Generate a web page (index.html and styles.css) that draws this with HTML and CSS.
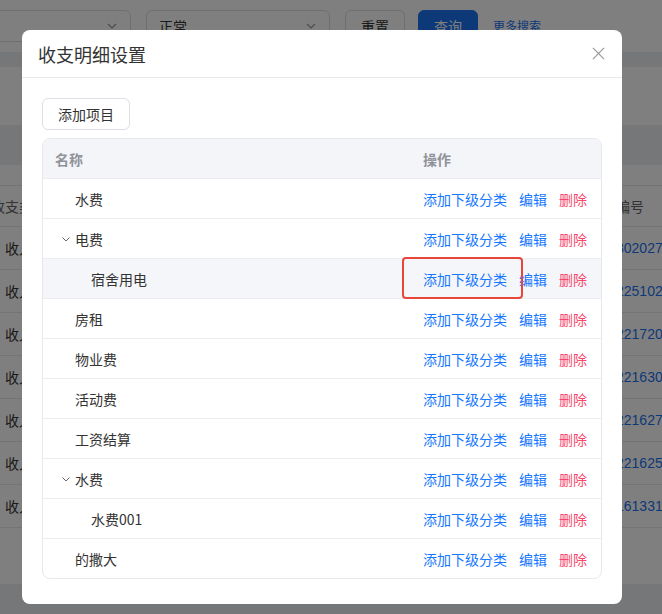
FILE: index.html
```html
<html>
<head>
<meta charset="utf-8">
<title>收支明细</title>
<link rel="stylesheet" href="styles.css">
</head>
<body>

<div class="page">
  <div class="search">
    <div class="select selA"><span></span><svg class="arrow" viewBox="0 0 12 12"><path d="M2 4l4 4 4-4"/></svg></div>
    <div class="select selB"><span>正常</span><svg class="arrow" viewBox="0 0 12 12"><path d="M2 4l4 4 4-4"/></svg></div>
    <div class="btn reset">重置</div>
    <div class="btn primary">查询</div>
    <div class="more">更多搜索</div>
  </div>
  <div class="gap"></div>
  <div class="card">
    <div class="toolbar"></div>
    <div class="bgTable">
      <div class="bgRow bgHead"><div class="c1">收支类型</div><div class="c2"></div><div class="c3 txt">编号</div></div>
      <div class="bgRow"><div class="c1">收入</div><div class="c2"></div><div class="c3">302027</div></div>
      <div class="bgRow"><div class="c1">收入</div><div class="c2"></div><div class="c3">2251029</div></div>
      <div class="bgRow"><div class="c1">收入</div><div class="c2"></div><div class="c3">221720</div></div>
      <div class="bgRow"><div class="c1">收入</div><div class="c2"></div><div class="c3">221630</div></div>
      <div class="bgRow"><div class="c1">收入</div><div class="c2"></div><div class="c3">221627</div></div>
      <div class="bgRow"><div class="c1">收入</div><div class="c2"></div><div class="c3">221625</div></div>
      <div class="bgRow"><div class="c1">收入</div><div class="c2"></div><div class="c3">161331</div></div>
    </div>
  </div>
</div>

<div class="mask"></div>

<div class="dialogWrap">
<div class="dialog">
  <div class="dHeader">
    <div class="dTitle">收支明细设置</div>
    <svg class="close" viewBox="0 0 14 14"><path d="M1 1L13 13M13 1L1 13"/></svg>
  </div>
  <div class="dBody">
    <div class="addBtn">添加项目</div>
    <div class="tree">
      <div class="row head"><div class="name">名称</div><div class="ops">操作</div></div>

      <div class="row"><div class="name"><span class="ph"></span>水费</div>
        <div class="ops"><a class="link">添加下级分类</a><a class="link">编辑</a><a class="link del">删除</a></div></div>

      <div class="row"><div class="name"><span class="ph"><svg class="chev" viewBox="0 0 10 10"><path d="M1.5 3.5L5 7l3.5-3.5"/></svg></span>电费</div>
        <div class="ops"><a class="link">添加下级分类</a><a class="link">编辑</a><a class="link del">删除</a></div></div>

      <div class="row hover"><div class="name"><span class="indent"></span><span class="ph"></span>宿舍用电</div>
        <div class="ops"><div class="mark"></div><a class="link">添加下级分类</a><a class="link">编辑</a><a class="link del">删除</a></div></div>

      <div class="row"><div class="name"><span class="ph"></span>房租</div>
        <div class="ops"><a class="link">添加下级分类</a><a class="link">编辑</a><a class="link del">删除</a></div></div>

      <div class="row"><div class="name"><span class="ph"></span>物业费</div>
        <div class="ops"><a class="link">添加下级分类</a><a class="link">编辑</a><a class="link del">删除</a></div></div>

      <div class="row"><div class="name"><span class="ph"></span>活动费</div>
        <div class="ops"><a class="link">添加下级分类</a><a class="link">编辑</a><a class="link del">删除</a></div></div>

      <div class="row"><div class="name"><span class="ph"></span>工资结算</div>
        <div class="ops"><a class="link">添加下级分类</a><a class="link">编辑</a><a class="link del">删除</a></div></div>

      <div class="row"><div class="name"><span class="ph"><svg class="chev" viewBox="0 0 10 10"><path d="M1.5 3.5L5 7l3.5-3.5"/></svg></span>水费</div>
        <div class="ops"><a class="link">添加下级分类</a><a class="link">编辑</a><a class="link del">删除</a></div></div>

      <div class="row"><div class="name"><span class="indent"></span><span class="ph"></span>水费001</div>
        <div class="ops"><a class="link">添加下级分类</a><a class="link">编辑</a><a class="link del">删除</a></div></div>

      <div class="row"><div class="name"><span class="ph"></span>的撒大</div>
        <div class="ops"><a class="link">添加下级分类</a><a class="link">编辑</a><a class="link del">删除</a></div></div>
    </div>
  </div>
</div>
</div>

</body>
</html>
```

FILE: styles.css
```css
body{
margin:0;
background-color:#eceef2;
font-family:"Noto Sans CJK SC","Liberation Sans",sans-serif;
font-size:14px;
color:#333;
overflow:hidden;
}

/* page behind the dialog */
.page{width:662px;}
.search{
background-color:#fff;
display:flex;
height:52px;
padding-top:10px;
box-sizing:border-box;
align-items:flex-start;
}
.select{
height:32px;
box-sizing:border-box;
border:1px solid #dcdfe6;
border-radius:6px;
display:flex;
align-items:center;
justify-content:space-between;
padding:0 12px;
}
.selA{width:200px;margin-left:-69px;}
.selB{width:184px;margin-left:15px;}
.arrow{width:12px;height:12px;fill:none;stroke:#999;stroke-width:1.2;}
.btn{
height:32px;
box-sizing:border-box;
border:1px solid #dcdfe6;
border-radius:6px;
display:flex;
align-items:center;
justify-content:center;
width:60px;
}
.reset{margin-left:15px;}
.primary{margin-left:13px;background-color:#1a73f0;border-color:#1a73f0;color:#fff;}
.more{margin-left:15px;font-size:12px;color:#1a73f0;line-height:32px;}
.gap{height:15px;}
.card{background-color:#fff;padding-top:58px;padding-bottom:56px;}
.toolbar{height:40px;background-color:#eceef2;margin-bottom:20px;}
.bgTable{margin-left:-36px;width:720px;border-top:1px solid #e6e8eb;}
.bgRow{display:flex;height:43px;align-items:center;border-bottom:1px solid #e6e8eb;box-sizing:border-box;}
.bgHead{height:41px;color:#666;}
.c1{width:110px;text-align:center;}
.c2{width:542px;}
.c3{color:#1a73f0;font-family:"Liberation Sans",sans-serif;}
.c3.txt{color:#666;font-family:"Noto Sans CJK SC",sans-serif;}

.mask{position:fixed;left:0;top:0;right:0;bottom:0;background-color:rgba(0,0,0,0.5);}

/* dialog */
.dialogWrap{position:fixed;left:0;top:0;right:0;bottom:0;padding:30px 0 0 22px;}
.dialog{
width:600px;
background-color:#fff;
border-radius:8px;
}
.dHeader{
height:48px;
box-sizing:border-box;
border-bottom:1px solid #e8e8e8;
display:flex;
align-items:center;
justify-content:space-between;
padding:0 17px 0 16px;
}
.dTitle{font-size:18px;color:#333;line-height:24px;}
.close{width:13px;height:13px;fill:none;stroke:#999;stroke-width:1.3;}

.dBody{padding:20px 20px 25px 20px;}
.addBtn{
display:inline-flex;
align-items:center;
height:32px;
box-sizing:border-box;
padding:0 15px;
border:1px solid #dcdfe6;
border-radius:6px;
color:#333;
margin-bottom:8px;
}

.tree{border:1px solid #e6e8eb;border-radius:8px;overflow:hidden;}
.row{display:flex;height:40px;align-items:center;border-top:1px solid #ebedf0;box-sizing:border-box;}
.row.head{border-top:none;height:39px;background-color:#f4f5f9;color:#909399;font-weight:bold;}
.row.hover{background-color:#f5f6fa;}
.name{width:356px;padding-left:12px;display:flex;align-items:center;}
.ops{padding-left:12px;display:flex;align-items:center;position:relative;height:100%;}
.indent{width:16px;flex:none;}
.ph{width:20px;flex:none;display:flex;align-items:center;}
.chev{width:10px;height:10px;margin-left:6px;fill:none;stroke:#666;stroke-width:1;}
.link{color:#1677ff;margin-right:12px;cursor:pointer;}
.del{color:#f5476b;}
.mark{position:absolute;left:-9px;top:-2px;width:121px;height:42px;border:2px solid #e8453c;border-radius:4px;box-sizing:border-box;}
```
